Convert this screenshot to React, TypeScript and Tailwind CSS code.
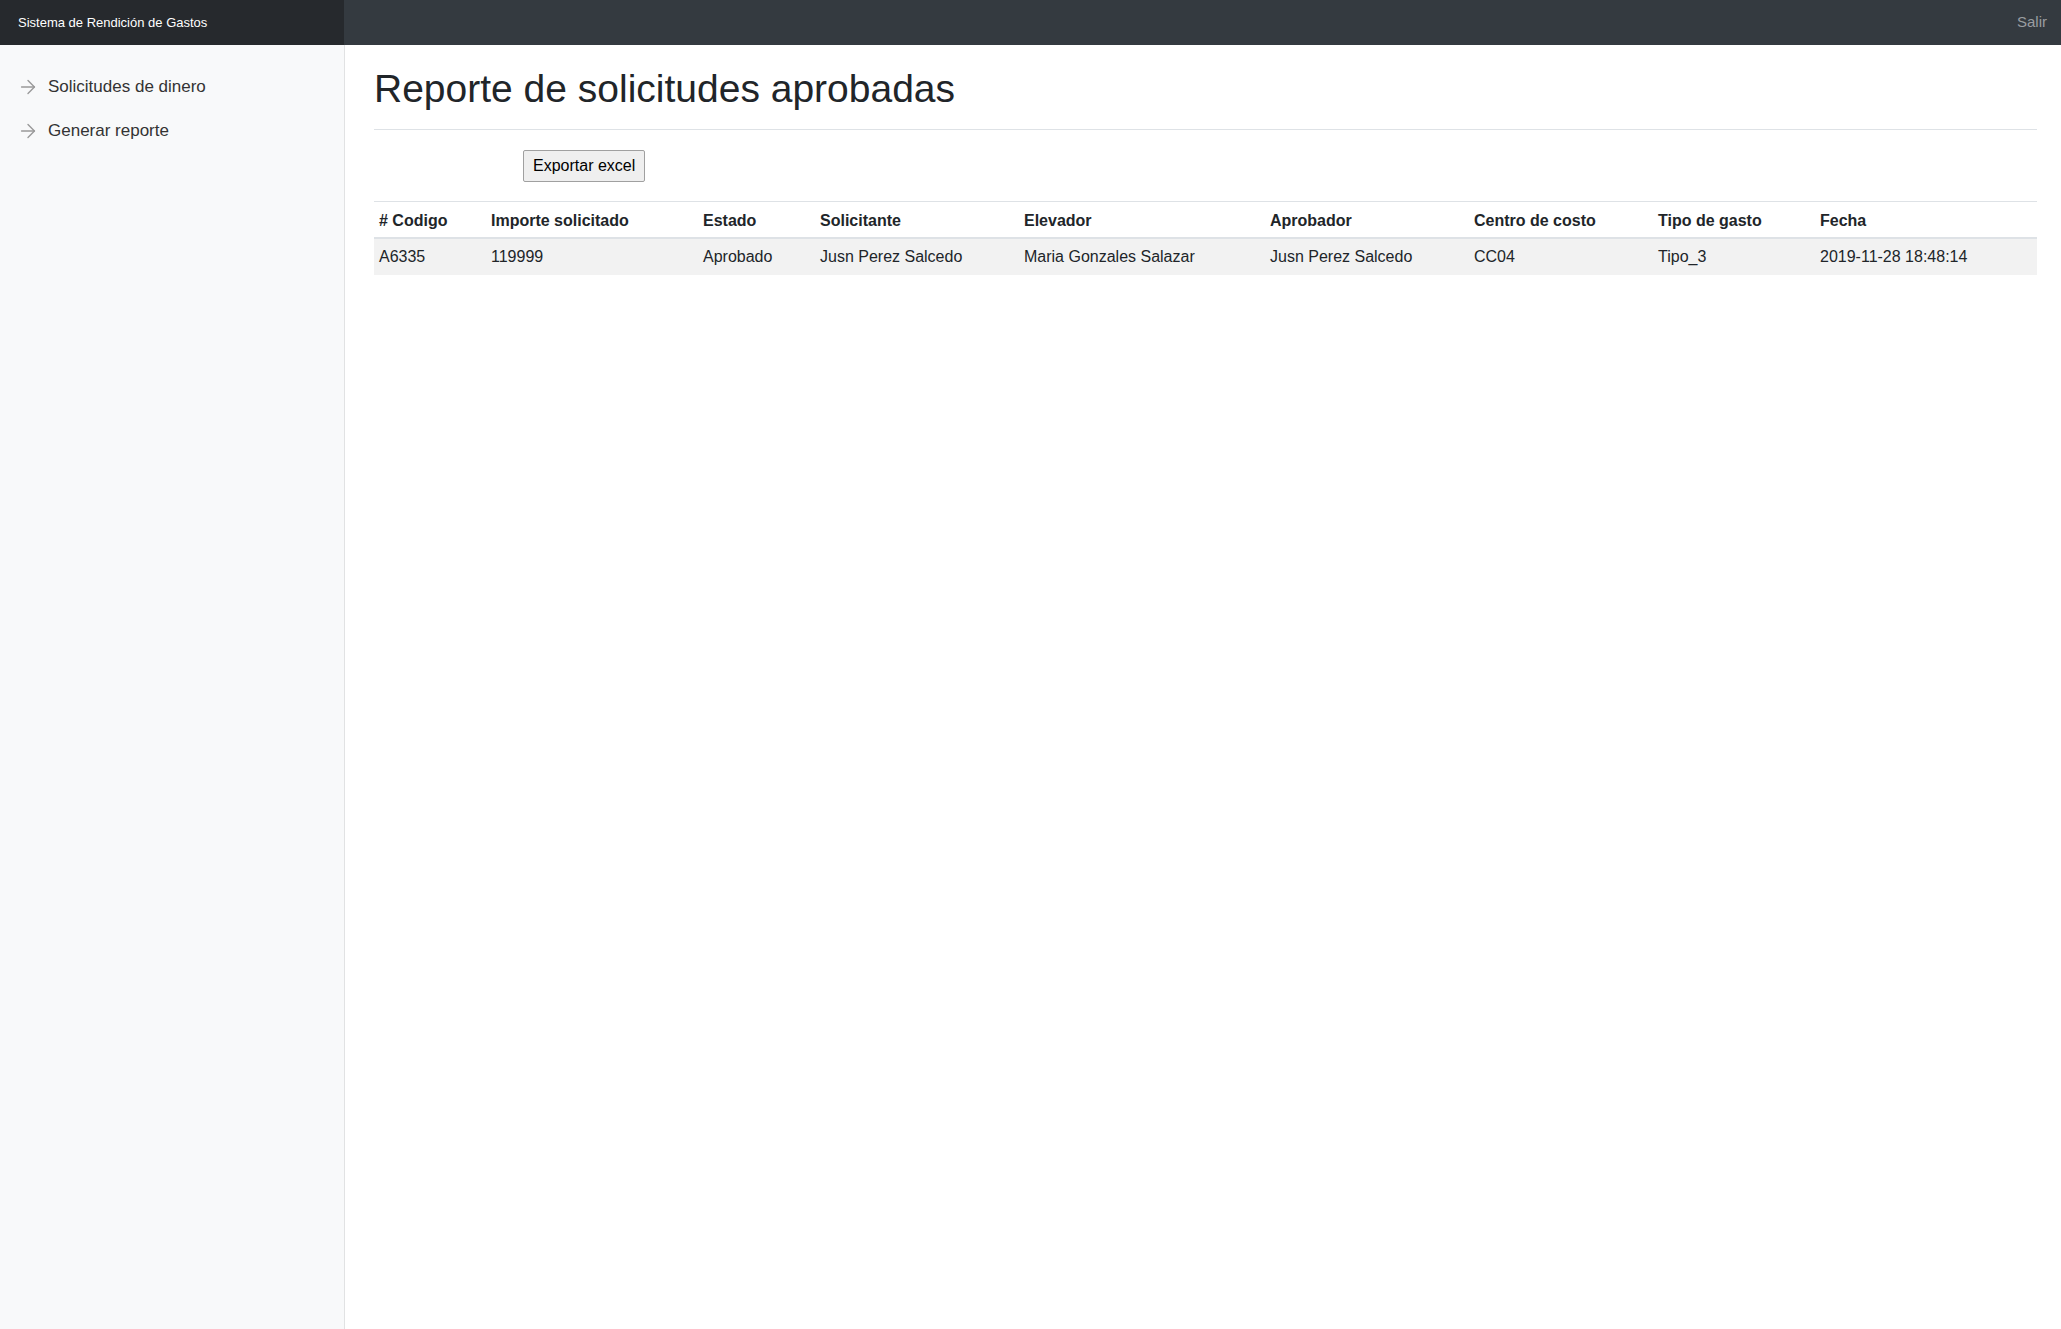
import React from 'react';
import { ArrowRight } from 'lucide-react';

const App: React.FC = () => {
    const NAV = ["Solicitudes de dinero", "Generar reporte"];

    const COLUMNS = [
        { title: "# Codigo", width: "w-[112px]" },
        { title: "Importe solicitado", width: "w-[212px]" },
        { title: "Estado", width: "w-[117px]" },
        { title: "Solicitante", width: "w-[204px]" },
        { title: "Elevador", width: "w-[246px]" },
        { title: "Aprobador", width: "w-[204px]" },
        { title: "Centro de costo", width: "w-[184px]" },
        { title: "Tipo de gasto", width: "w-[162px]" },
        { title: "Fecha", width: "w-[222px]" },
    ];

    const ROWS = [
        ["A6335", "119999", "Aprobado", "Jusn Perez Salcedo", "Maria Gonzales Salazar", "Jusn Perez Salcedo", "CC04", "Tipo_3", "2019-11-28 18:48:14"],
    ];

    return (
        <div className="h-screen flex flex-col font-['Liberation_Sans',Arial,sans-serif] text-[#212529]">
            {/* Top navbar */}
            <header className="h-[45px] flex items-stretch bg-[#343a40] shrink-0">
                <div className="w-[344px] bg-[#26292d] flex items-center pl-[18px] text-white text-[13px]">
                    Sistema de Rendición de Gastos
                </div>
                <div className="flex-1 flex items-center justify-end pr-[14px]">
                    <a className="text-[15px] text-[#9a9da0]">Salir</a>
                </div>
            </header>

            <div className="flex-1 flex">
                {/* Sidebar */}
                <aside className="w-[345px] shrink-0 bg-[#f8f9fa] border-r border-[#e1e2e3] pt-5">
                    <ul>
                        {NAV.map(item => (
                            <li key={item} className="h-[44px] flex items-center pl-[17px] gap-[9px] text-[#333] text-[17px]">
                                <ArrowRight size={22} strokeWidth={1.5} className="text-[#999]" />
                                {item}
                            </li>
                        ))}
                    </ul>
                </aside>

                {/* Main */}
                <main className="flex-1 bg-white pl-[29px] pr-[24px] pt-5">
                    <div className="pb-[17px] border-b border-[#dee2e6]">
                        <h1 className="text-[39px] leading-[47px] text-[#212529]">Reporte de solicitudes aprobadas</h1>
                    </div>

                    <div className="pt-5 pb-[19px] pl-[149px]">
                        <button className="h-[32px] px-[9px] border border-[#a0a0a0] rounded-[2px] bg-[#efefef] text-black text-[16px] leading-6">
                            Exportar excel
                        </button>
                    </div>

                    <table className="w-full table-fixed border-collapse text-[16px]">
                        <colgroup>
                            {COLUMNS.map(col => (
                                <col key={col.title} className={col.width} />
                            ))}
                        </colgroup>
                        <thead>
                            <tr>
                                {COLUMNS.map(col => (
                                    <th key={col.title} className="text-left font-bold px-[5px] pt-[7px] pb-[4px] leading-6 border-t border-b-2 border-[#dee2e6] whitespace-nowrap">
                                        {col.title}
                                    </th>
                                ))}
                            </tr>
                        </thead>
                        <tbody>
                            {ROWS.map(row => (
                                <tr key={row[0]} className="bg-[#f2f2f2]">
                                    {row.map((cell, i) => (
                                        <td key={i} className="px-[5px] pt-[6px] pb-[6px] leading-6 border-t border-[#dee2e6] whitespace-nowrap">
                                            {cell}
                                        </td>
                                    ))}
                                </tr>
                            ))}
                        </tbody>
                    </table>
                </main>
            </div>
        </div>
    );
};

export default App;
